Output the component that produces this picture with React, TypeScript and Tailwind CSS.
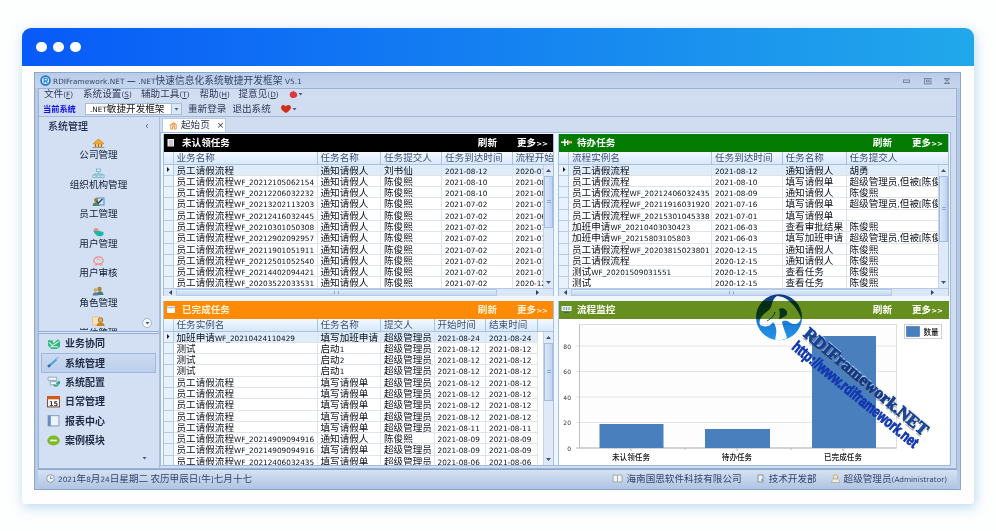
import React from "react";

const latin = "font-['DejaVu_Sans','Noto_Sans',sans-serif] text-[7.3px] leading-[0]";

/** Splits mixed text so that Latin runs use a smaller, wider face than the Chinese runs. */
function T({ children }: { children: string }) {
  const parts = children.match(/[\x20-\x7e]+|[^\x20-\x7e]+/g) || [];
  return (
    <>
      {parts.map((p, i) =>
        /^[\x20-\x7e]/.test(p) ? (
          <span key={i} className={latin}>{p}</span>
        ) : (
          <span key={i}>{p}</span>
        )
      )}
    </>
  );
}

type Col = { title: string; w: string };

function Header({ title, color, icon, titleClass = "" }: { title: string; color: string; icon: React.ReactNode; titleClass?: string }) {
  return (
    <div className={`flex h-[18px] shrink-0 items-center pb-px pl-[3px] font-bold text-white ${color}`}>
      <span className="flex w-[16px] items-center">{icon}</span>
      <span className={titleClass}>{title}</span>
      <span className={`ml-auto mr-[20px] ${titleClass}`}>刷新</span>
      <span className={`mr-[7px] w-[30px] whitespace-nowrap ${titleClass}`}>更多<span className="font-['DejaVu_Sans',sans-serif] text-[7px]">&gt;&gt;</span></span>
    </div>
  );
}

function VScroll({ thumb }: { thumb: string }) {
  return (
    <div className="flex w-[10px] shrink-0 flex-col items-center border-l border-[#c3d5ee] bg-[#dfe9f8]">
      <svg width="9" height="11" viewBox="0 0 9 11"><path d="M2 7 4.5 4 7 7z" fill="#3d5678" /></svg>
      <div className={`flex w-[9px] items-center justify-center border border-[#a3bce0] bg-gradient-to-r from-[#dbe8fa] to-[#bfd2ef] ${thumb}`}>
        <span className="h-[3px] w-[4px] border-y border-[#91aad0]" />
      </div>
      <svg className="mt-auto" width="9" height="11" viewBox="0 0 9 11"><path d="M2 4 4.5 7 7 4z" fill="#3d5678" /></svg>
    </div>
  );
}

function HScroll() {
  return (
    <div className="flex h-[8px] shrink-0 items-center border-t border-[#b5cae8] bg-[#dbe6f7]">
      <svg width="12" height="7" viewBox="0 0 12 7"><path d="M8 1 5 3.5 8 6z" fill="#2b405f" /></svg>
      <div className="flex h-[7px] w-[321px] items-center justify-center border border-[#b4c9e8] bg-gradient-to-b from-[#e2edfb] to-[#c2d5f0]">
        <span className="h-[3px] w-[5px] border-x border-[#91aad0]" />
      </div>
      <svg className="ml-auto mr-[11px]" width="10" height="7" viewBox="0 0 10 7"><path d="M4 1 7 3.5 4 6z" fill="#2b405f" /></svg>
    </div>
  );
}

function Grid({ cols, rows, thumb, first }: { cols: Col[]; rows: string[][]; thumb: string; first: string }) {
  return (
    <div className="flex min-h-0 flex-1 flex-col overflow-hidden bg-white">
      <div className="flex h-[12.5px] shrink-0 overflow-hidden border-b border-[#a9c3e4] bg-gradient-to-b from-[#f3f9ff] to-[#d8e8fa] text-[#3f5078]">
        <div className={`shrink-0 border-r border-[#b5cce8] ${first}`} />
        {cols.map((c, i) => (
          <div key={i} className={`shrink-0 overflow-x-clip whitespace-nowrap border-r border-[#a9c3e4] pl-[3px] leading-[11px] ${c.w}`}>{c.title}</div>
        ))}
      </div>
      <div className="flex min-h-0 flex-1">
        <div className="min-w-0 flex-1 overflow-hidden">
          {rows.map((r, ri) => (
            <div key={ri} className={`flex h-[11.3px] w-max ${ri === 0 ? "bg-[#dfedfb]" : "bg-white"}`}>
              <div className={`flex shrink-0 items-center justify-center border-b border-r border-[#b5cce8] bg-[#e8f2fd] ${first}`}>
                {ri === 0 && <svg width="4" height="5" viewBox="0 0 4 5"><path d="M1 0 3.5 2.5 1 5z" fill="#111827" /></svg>}
              </div>
              {cols.map((c, i) => (
                <div key={i} className={`shrink-0 overflow-x-clip whitespace-nowrap border-b border-r border-[#dfe4ea] pl-[3px] leading-[10.3px] text-[#0c1018] ${c.w}`}>
                  <T>{r[i] || ""}</T>
                </div>
              ))}
            </div>
          ))}
        </div>
        <VScroll thumb={thumb} />
      </div>
    </div>
  );
}

const colsA: Col[] = [
  { title: "业务名称", w: "w-[144px]" },
  { title: "任务名称", w: "w-[63.5px]" },
  { title: "任务提交人", w: "w-[61px]" },
  { title: "任务到达时间", w: "w-[70.5px]" },
  { title: "流程开始", w: "w-[60px]" },
];
const flow = "员工请假流程";
const rowsA = [
  [flow, "通知请假人", "刘书仙", "2021-08-12", "2020-07-0"],
  [flow + "WF_20212105062154", "通知请假人", "陈俊熙", "2021-08-10", "2021-08-0"],
  [flow + "WF_20212206032232", "通知请假人", "陈俊熙", "2021-08-10", "2021-08-0"],
  [flow + "WF_20213202113203", "通知请假人", "陈俊熙", "2021-07-02", "2021-07-0"],
  [flow + "WF_20212416032445", "通知请假人", "陈俊熙", "2021-07-02", "2021-06-0"],
  [flow + "WF_20210301050308", "通知请假人", "陈俊熙", "2021-07-02", "2021-07-0"],
  [flow + "WF_20212902092957", "通知请假人", "陈俊熙", "2021-07-02", "2021-07-0"],
  [flow + "WF_20211901051911", "通知请假人", "陈俊熙", "2021-07-02", "2021-07-0"],
  [flow + "WF_20212501052540", "通知请假人", "陈俊熙", "2021-07-02", "2021-07-0"],
  [flow + "WF_20214402094421", "通知请假人", "陈俊熙", "2021-07-02", "2021-07-0"],
  [flow + "WF_20203522033531", "通知请假人", "陈俊熙", "2021-07-02", "2020-12-0"],
];
const colsB: Col[] = [
  { title: "流程实例名", w: "w-[143px]" },
  { title: "任务到达时间", w: "w-[70.5px]" },
  { title: "任务名称", w: "w-[64px]" },
  { title: "任务提交人", w: "w-[104px]" },
];
const admin = "超级管理员";
const rowsB = [
  [flow, "2021-08-12", "通知请假人", "胡勇"],
  [flow, "2021-08-10", "填写请假单", "超级管理员,但被[陈俊熙]"],
  [flow + "WF_20212406032435", "2021-08-09", "通知请假人", "陈俊熙"],
  [flow + "WF_20211916031920", "2021-07-16", "填写请假单", "超级管理员,但被[陈俊熙]"],
  [flow + "WF_20215301045338", "2021-07-01", "填写请假单", ""],
  ["加班申请WF_20210403030423", "2021-06-03", "查看审批结果", "陈俊熙"],
  ["加班申请WF_20215803105803", "2021-06-03", "填写加班申请", "超级管理员,但被[陈俊熙]"],
  [flow + "WF_20203815023801", "2020-12-15", "通知请假人", "陈俊熙"],
  [flow, "2020-12-15", "通知请假人", "陈俊熙"],
  ["测试WF_20201509031551", "2020-12-15", "查看任务", "陈俊熙"],
  ["测试", "2020-12-15", "查看任务", "陈俊熙"],
];
const colsC: Col[] = [
  { title: "任务实例名", w: "w-[144px]" },
  { title: "任务名称", w: "w-[63.5px]" },
  { title: "提交人", w: "w-[53.5px]" },
  { title: "开始时间", w: "w-[51.5px]" },
  { title: "结束时间", w: "w-[52px]" },
];
const rowsC = [
  ["加班申请WF_20210424110429", "填写加班申请", admin, "2021-08-24", "2021-08-24"],
  ["测试", "启动1", admin, "2021-08-12", "2021-08-12"],
  ["测试", "启动2", admin, "2021-08-12", "2021-08-12"],
  ["测试", "启动1", admin, "2021-08-12", "2021-08-12"],
  [flow, "填写请假单", admin, "2021-08-12", "2021-08-12"],
  [flow, "填写请假单", admin, "2021-08-12", "2021-08-12"],
  [flow, "填写请假单", admin, "2021-08-12", "2021-08-12"],
  [flow, "填写请假单", admin, "2021-08-12", "2021-08-12"],
  [flow, "填写请假单", admin, "2021-08-11", "2021-08-11"],
  [flow + "WF_20214909094916", "通知请假人", "陈俊熙", "2021-08-09", "2021-08-09"],
  [flow + "WF_20214909094916", "填写请假单", admin, "2021-08-09", "2021-08-09"],
  [flow + "WF_20212406032435", "填写请假单", admin, "2021-08-06", "2021-08-06"],
];

function Chart() {
  const ticks = [0, 20, 40, 60, 80];
  const bars = [
    { x: 40.5, w: 64, top: 105, label: "未认领任务", c: 72 },
    { x: 146, w: 65, top: 110, label: "待办任务", c: 178 },
    { x: 253, w: 64, top: 17, label: "已完成任务", c: 284 },
  ];
  return (
    <svg width="391" height="145" viewBox="0 0 391 145" className="block bg-white">
      <rect x="20.5" y="5.500" width="317" height="123.500" fill="#fdfdfd" stroke="#d5d5d5" strokeWidth=".8" />
      {ticks.map((t) => (
        <g key={t}>
          <line x1="17" x2="337.500" y1={129 - t * 1.275} y2={129 - t * 1.275} stroke={t ? "#e4e4e4" : "#b8b8b8"} />
          <text x="12" y={131.5 - t * 1.275} textAnchor="end" className="fill-[#333] font-['DejaVu_Sans',sans-serif] text-[6px]">{t}</text>
        </g>
      ))}
      <line x1="20.5" x2="20.5" y1="6" y2="129" stroke="#c0c0c0" />
      {bars.map((b) => (
        <g key={b.label}>
          <rect x={b.x} y={b.top} width={b.w} height={129 - b.top} fill="#4a7fbd" />
          <line x1={b.c} x2={b.c} y1="129" y2="132" stroke="#b8b8b8" />
          <text x={b.c} y="140.500" textAnchor="middle" className="fill-[#111] text-[7.6px] font-medium">{b.label}</text>
        </g>
      ))}
      <line x1="126" x2="126" y1="129" y2="131" stroke="#b8b8b8" />
      <line x1="232" x2="232" y1="129" y2="131" stroke="#b8b8b8" />
      <rect x="345.5" y="5.500" width="37" height="14" fill="#fff" stroke="#cfcfcf" />
      <rect x="347.500" y="7.500" width="13" height="10" fill="#4a7fbd" stroke="#3b6eac" strokeWidth=".6" />
      <text x="364.500" y="15.500" className="fill-[#111] text-[7.6px] font-medium">数量</text>
    </svg>
  );
}

function Watermark() {
  return (
    <>
      <svg className="pointer-events-none absolute left-[740px] top-[285px] mix-blend-multiply" width="80" height="60" viewBox="0 0 80 60">
        <defs>
          <linearGradient id="disc" x1="0" y1="0" x2="0" y2="1">
            <stop offset="0" stopColor="#123f86" />
            <stop offset=".45" stopColor="#0f5cae" />
            <stop offset=".6" stopColor="#1a7fd6" />
            <stop offset="1" stopColor="#2396ec" />
          </linearGradient>
        </defs>
        <circle cx="39" cy="32.300" r="23" fill="url(#disc)" />
        <path d="M37 11C46 11 56 20 61 33C60 39 54 41 49 37C46 35 43 36 42 37C43 43 46 48 47 53C44 55 38 56 35 54.500C37 47 37 42 33 37C31 41 26 43 20 40C18 34 23 29 29 25C33 21 31 15 37 11z" fill="#fff" />
        <path d="M39 24C43 22 48 25 47 29C46 32 42 32 39 34.500C40 30 40 27 39 24z" fill="#0f5cae" />
        <path d="M35 27C34 31 31 34 27 36" fill="none" stroke="#0f5cae" strokeWidth="1" />
      </svg>
      <svg className="pointer-events-none absolute left-[740px] top-[285px]" width="200" height="175" viewBox="0 0 200 175">
        <defs>
          <linearGradient id="name" x1="0" y1="0" x2="1" y2="0">
            <stop offset="0" stopColor="#1747a8" />
            <stop offset=".45" stopColor="#12306f" />
            <stop offset="1" stopColor="#1f4fae" />
          </linearGradient>
        </defs>
        <g transform="translate(63 49) rotate(40)" className="font-['Liberation_Serif',serif] text-[17px] font-bold">
          <text x="2" y="3.500" textLength="157" lengthAdjust="spacingAndGlyphs" className="fill-[#6f7d88]" opacity=".6">RDIFramework.NET</text>
          <text x="-.5" y="0" textLength="157" lengthAdjust="spacingAndGlyphs" className="fill-[#c8d8ee]" opacity=".7">RDIFramework.NET</text>
          <text x=".5" y="1.500" textLength="157" lengthAdjust="spacingAndGlyphs" fill="url(#name)" stroke="#163c88" strokeWidth=".8">RDIFramework.NET</text>
        </g>
        <g transform="translate(51 63.500) rotate(39.300)">
          <text x="0" y="0" textLength="158" lengthAdjust="spacingAndGlyphs" stroke="#1238b0" strokeWidth=".9" className="fill-[#1238b0] font-['Liberation_Sans',sans-serif] text-[15.500px] font-bold">http://www.rdiframework.net</text>
        </g>
      </svg>
    </>
  );
}

const sideIcons: React.ReactNode[] = [
  <g key="0"><path d="M1 5 6 1l5 4v1H1z" fill="#e9ad3d" stroke="#c98416" strokeWidth=".6" /><path d="M2 6h8v3H2z" fill="#f2c56b" /><path d="M3 6v3M6 6v3M9 6v3" stroke="#a86c1c" /><path d="M0 9.500h12" stroke="#8b9ab0" /></g>,
  <g key="1" fill="#dff2f8" stroke="#6db0c4" strokeWidth=".8"><path d="M6 3v3M2 8V6h8v2" fill="none" /><rect x="4" y="1" width="4" height="2.500" /><rect x=".5" y="7" width="3" height="2.500" /><rect x="4.500" y="7" width="3" height="2.500" /><rect x="8.500" y="7" width="3" height="2.500" /></g>,
  <g key="2"><rect x="4.500" y="1" width="7" height="7" fill="#cfe2f6" stroke="#5689c6" /><circle cx="3.500" cy="3" r="2" fill="#a97936" /><path d="M0 9c0-5 7-5 7 0z" fill="#4a8b65" /><path d="m4 4 2 2 4-4" stroke="#2c4760" fill="none" strokeWidth="1.300" /></g>,
  <g key="3"><circle cx="3.500" cy="3.500" r="2.500" fill="#f28b82" /><path d="M1 4h6l4 1v3c-4 3-8 1-10-4z" fill="#1fb6a8" /></g>,
  <g key="4" fill="none" stroke="#f08b86" strokeWidth="1.200"><ellipse cx="6" cy="4.500" rx="4.700" ry="3.700" /><path d="M2 9h2l1-2M10 9H8L7 7" /><path d="M4 3c2-1 3 2 4 1" strokeWidth=".8" /></g>,
  <g key="5"><circle cx="7" cy="3" r="2.200" fill="#b18430" /><circle cx="3" cy="4" r="1.800" fill="#d3a557" /><path d="M4 9c0-5 7-5 7 0z" fill="#3f7d7a" /><path d="M0 9.500C0 5 6 5 6 9.500z" fill="#637c9e" /></g>,
  <g key="6"><path d="M0 1h7v8H0z" fill="#f8e3c0" stroke="#f0b06a" strokeWidth=".7" /><circle cx="8" cy="4" r="2.300" fill="#e8ad55" stroke="#91601c" strokeWidth=".8" /><path d="M4 10c0-5 8-5 8 0z" fill="#c98322" /></g>,
];
const sideItems = ["公司管理", "组织机构管理", "员工管理", "用户管理", "用户审核", "角色管理", "岗位管理"];

const navIcons: React.ReactNode[] = [
  <g key="0"><path d="M1 3h4l1 3 4-4 2 2v5L9 11H4L1 8z" fill="#37b580" /><path d="m2 5 3 3 6-4M3 9h7" stroke="#d8fff0" fill="none" /></g>,
  <g key="1"><path d="M1 10 9 3" stroke="#5aa2d8" strokeWidth="2" /><path d="M8 1 12 1 9 4z" fill="#9ec4e4" /><path d="m1 10 2-2" stroke="#2c6aa8" strokeWidth="2" /></g>,
  <g key="2"><path d="M1 2h8v3H1zM3 6h6v3H3z" fill="#edf4f8" stroke="#8aa6b8" strokeWidth=".8" /><path d="M6 9c3 3 5 0 5-3M9 8l2-2 1 2" fill="none" stroke="#28a37c" strokeWidth="1.200" /></g>,
  <g key="3"><rect x=".5" y="1.500" width="11" height="9.500" fill="#fff" stroke="#7a5040" /><path d="M0 1h12v3H0z" fill="#cf5a17" /><text x="6" y="10" textAnchor="middle" className="fill-[#333] font-['DejaVu_Sans',sans-serif] text-[6px] font-bold">15</text></g>,
  <g key="4"><rect x="1" y="1.500" width="10" height="9.500" fill="#eef4fb" stroke="#8da5c2" /><path d="M1 1.500h2.500v9.500H1z" fill="#5e8ec4" /></g>,
  <g key="5"><ellipse cx="6" cy="6" rx="5.700" ry="4.700" fill="#7cba29" /><path d="M3 6h6" stroke="#f4ffe0" strokeWidth="1.600" /></g>,
];
const navItems = ["业务协同", "系统管理", "系统配置", "日常管理", "报表中心", "案例模块"];

function Menu({ label, k, w }: { label: string; k: string; w: string }) {
  return (
    <span className={`whitespace-nowrap ${w}`}>
      {label}
      <span className={latin}>(<u>{k}</u>)</span>
    </span>
  );
}

function Caret() {
  return <svg width="5" height="4" viewBox="0 0 5 4"><path d="M.5 1h4l-2 2.500z" fill="#4a5a78" /></svg>;
}

export default function App() {
  return (
    <div className="relative h-[531px] w-[996px] overflow-hidden bg-[#fdfefe] pl-[22px] pt-[28px] font-['Noto_Sans_CJK_SC',sans-serif] text-[9.6px] leading-none text-[#2c3a58]">
      <div className="h-[476px] w-[952px] rounded-[9px] rounded-b-[3px] bg-[#fefefe] shadow-[1px_3px_12px_rgba(120,180,225,0.5)]">
        <div className="flex h-[38px] items-center gap-[6.500px] rounded-t-[9px] bg-linear-to-r/srgb from-[#085af8] to-[#21a8ea] pl-[14px]">
          <span className="size-[10.500px] rounded-full bg-white" />
          <span className="size-[10.500px] rounded-full bg-white" />
          <span className="size-[10.500px] rounded-full bg-white" />
        </div>

        <div className="ml-[12px] mt-[6px] flex h-[418px] w-[927px] flex-col border border-[#8ba6d0] bg-[#b6c9e5]">
          {/* Title bar */}
          <div className="flex h-[15px] shrink-0 items-center bg-gradient-to-b from-[#b9cce8] to-[#c6d6ed] pl-[5px]">
            <svg width="11" height="11" viewBox="0 0 12 12">
              <circle cx="6" cy="6" r="4.800" fill="#eef6ff" stroke="#1678cf" strokeWidth="1.800" />
              <path d="M4.500 9V3.500h2a1.600 1.600 0 0 1 0 3.200h-2M6.500 6.700 8 9" fill="none" stroke="#1678cf" strokeWidth="1.200" />
            </svg>
            <span className="ml-[2px] whitespace-nowrap text-[9.700px] tracking-[.09px] text-[#33466a]"><T>RDIFramework.NET </T><span className="font-bold">—</span><T> .NET快速信息化系统敏捷开发框架 V5.1</T></span>
            <svg className="ml-auto mr-[6px]" width="52" height="8" viewBox="0 0 52 8" fill="none" stroke="#7686a4">
              <rect x="1.500" y="3" width="6" height="2.500" />
              <rect x="22.500" y="1.500" width="6.500" height="5.500" /><rect x="24.500" y="3" width="2.500" height="2" />
              <path d="M42 1.500h6M42 6.500h6M43 2l4 4M47 2l-4 4" strokeWidth="1.200" />
            </svg>
          </div>

          <div className="mx-[3px] flex min-h-0 flex-1 flex-col border border-[#9bb2d6] bg-[#d0dcef]">
            {/* Menu bar */}
            <div className="flex h-[12px] shrink-0 items-center bg-[#d1ddf0] pb-[2px] pl-[5px]">
              <Menu label="文件" k="F" w="w-[39px]" />
              <Menu label="系统设置" k="S" w="w-[58px]" />
              <Menu label="辅助工具" k="T" w="w-[58.5px]" />
              <Menu label="帮助" k="H" w="w-[39px]" />
              <Menu label="提意见" k="D" w="w-[50px]" />
              <svg width="9" height="9" viewBox="0 0 9 9"><path d="M1 3c2-2 6-2 7 1s-2 4-4 4S0 6 1 3z" fill="#e0383a" /><path d="M4 2 5 1" stroke="#e0383a" /></svg>
              <Caret />
            </div>
            {/* Toolbar */}
            <div className="flex h-[15px] shrink-0 items-center pl-[4px]">
              <span className="w-[42px] text-[8.200px] font-bold text-[#1414e6]">当前系统</span>
              <span className="flex h-[12px] w-[97px] items-center border border-[#a9bddb] bg-white pl-[4px] text-[#111]">
                <span className="whitespace-nowrap"><T>.NET敏捷开发框架</T></span>
                <span className="ml-auto flex h-full w-[10px] items-center justify-center border-l border-[#a9bddb] bg-[#dbe6f6]"><Caret /></span>
              </span>
              <span className="ml-[6px]">重新登录</span>
              <span className="ml-[6px]">退出系统</span>
              <svg className="ml-[9px]" width="12" height="10" viewBox="0 0 12 10"><path d="M6 9C2 7 0 4 1.500 2S5 1 6 2.500C7 1 9 .5 10.500 2S10 7 6 9z" fill="#d22f18" /></svg>
              <Caret />
            </div>

            <div className="flex min-h-0 flex-1 border-t border-[#a4b9da]">
              {/* Sidebar */}
              <div className="flex w-[121px] shrink-0 flex-col border-r border-[#a9bddb] bg-[#d3dff2]">
                <div className="flex h-[18px] shrink-0 items-center pl-[9px] text-[10px] font-medium text-[#1f2c49]">
                  系统管理
                  <svg className="ml-auto mr-[10px]" width="5" height="6" viewBox="0 0 5 6"><path d="M4 1 2 3l2 2" fill="none" stroke="#5e6f90" /></svg>
                </div>
                <div className="relative h-[196px] overflow-hidden pr-px">
                  {sideItems.map((s, i) => (
                    <div key={s} className="flex h-[29.600px] flex-col items-center pt-[3px]">
                      <svg className="shrink-0" width="13" height="11" viewBox="0 0 12 11">{sideIcons[i]}</svg>
                      <span className="whitespace-nowrap leading-[11px] text-[#131d33]">{s}</span>
                    </div>
                  ))}
                  <div className="absolute bottom-[3px] right-[7px] flex size-[10px] items-center justify-center rounded-full border border-[#a5b3c8] bg-[#f5f8fc]"><Caret /></div>
                </div>
                <div className="h-[3px] shrink-0 border-y border-[#8fabd6] bg-[#e4ecf8]" />
                <div className="pr-[3px]">
                  {navItems.map((s, i) => (
                    <div key={s} className={`ml-[2px] flex h-[19.400px] items-center border pb-px pl-[5px] text-[10px] font-semibold text-[#1f2b45] ${i === 1 ? "border-[#9db6df] bg-gradient-to-b from-[#ccdaf0] to-[#bccfeb]" : "border-transparent"}`}>
                      <svg className="mr-[5px]" width="13" height="13" viewBox="0 0 12 12">{navIcons[i]}</svg>
                      {s}
                    </div>
                  ))}
                </div>
                <div className="mr-[12px] mt-[6px] flex justify-end"><Caret /></div>
              </div>

              {/* Workspace */}
              <div className="min-w-0 flex-1">
                <div className="flex h-[15px] items-end pl-[2px]">
                  <div className="flex h-[14px] w-[64px] items-center border border-b-0 border-[#b8c9e2] bg-[#fdfeff] pb-px pl-[6px] text-[#2c3550]">
                    <svg width="9" height="9" viewBox="0 0 10 10"><path d="m0 5 5-4 5 4z" fill="#f1a455" /><path d="M2 5v4h2V6h2v3h2V5" fill="none" stroke="#e08b3a" /></svg>
                    <span className="ml-[3px]">起始页</span>
                    <span className="ml-[7px] font-['DejaVu_Sans',sans-serif] text-[9px]">×</span>
                  </div>
                </div>
                <div className="grid w-[791px] grid-cols-[391px_391px] grid-rows-[162px_164px] gap-x-[4px] gap-y-[5px] border border-[#9fb9e0] bg-[#f1f6fd] pl-[2px] pt-[1px]">
                  <section className="flex min-h-0 flex-col overflow-hidden border-x border-[#a3c0ea]">
                    <Header title="未认领任务" color="bg-black -mx-px" icon={<svg width="9" height="9" viewBox="0 0 9 9"><rect x="1.500" y="1" width="6.500" height="7.500" fill="#eee" /><path d="M3 3h4M3 5h4M3 7h4" stroke="#777" strokeWidth=".6" /></svg>} />
                    <Grid cols={colsA} rows={rowsA} thumb="h-[52px]" first="w-[9.500px]" />
                    <HScroll />
                  </section>
                  <section className="flex min-h-0 flex-col overflow-hidden border-x border-[#a3c0ea]">
                    <Header title="待办任务" color="bg-[#047c04] -mx-px" icon={<svg width="11" height="9" viewBox="0 0 11 9"><path d="M0 3.500h11v1.500H0zM3 1h1.500v7H3z" fill="#f5fff5" /><path d="M6 2h1.500v5H6z" fill="#cfe8ff" /><path d="M7.500 3h3v2.500h-3z" fill="#f0a060" /></svg>} />
                    <Grid cols={colsB} rows={rowsB} thumb="h-[66px]" first="w-[10px]" />
                    <HScroll />
                  </section>
                  <section className="flex min-h-0 flex-col overflow-hidden border-x border-[#a3c0ea]">
                    <Header title="已完成任务" color="bg-[#ff8a05] -mx-px" titleClass="text-[#fff3d6]" icon={<svg width="10" height="9" viewBox="0 0 10 9"><rect x="1" y="1" width="8" height="7" rx="1" fill="#fff" /><path d="M1 2.500h8" stroke="#9dc0e4" strokeWidth="1.500" /></svg>} />
                    <Grid cols={colsC} rows={rowsC} thumb="h-[58px]" first="w-[9.500px]" />
                  </section>
                  <section className="min-h-0 overflow-hidden border-l border-[#a3c0ea] bg-white">
                    <Header title="流程监控" color="bg-[#678f20] -ml-px" icon={<svg width="11" height="9" viewBox="0 0 11 9"><rect x=".5" y="1" width="10" height="5" fill="#e6f0f4" /><path d="M3 2v3M5.500 2v3M8 2v3" stroke="#6a8aa0" /><path d="M3 7.500h5" stroke="#3f6070" /></svg>} />
                    <Chart />
                  </section>
                </div>
              </div>
            </div>
          </div>

          {/* Status bar */}
          <div className="mx-[3px] flex h-[20px] shrink-0 items-center border-t border-[#8da6ca] bg-gradient-to-b from-[#d6e2f3] to-[#afc4e2] pb-[2px] pl-[8px] pr-[10px] text-[#33466b]">
            <svg width="9" height="9" viewBox="0 0 9 9"><circle cx="4.500" cy="4.500" r="3.800" fill="#eef2f7" stroke="#8596ad" strokeWidth=".9" /><path d="M4.500 2.500v2h2" fill="none" stroke="#607080" strokeWidth=".8" /></svg>
            <span className="ml-[3px] whitespace-nowrap"><T>2021年8月24日星期二 农历甲辰日[牛]七月十七</T></span>
            <svg className="ml-auto" width="11" height="9" viewBox="0 0 11 9"><path d="M1 1h4l.5.500L6 1h4v7H1zM5.500 1v7" fill="#f2f5ef" stroke="#8b9aa8" strokeWidth=".8" /></svg>
            <span className="ml-[4px] whitespace-nowrap">海南国思软件科技有限公司</span>
            <svg className="ml-[14px]" width="9" height="9" viewBox="0 0 9 9"><rect x="2" y="1" width="5" height="7" fill="#edf3f5" stroke="#8498a8" /><path d="M5 6h2" stroke="#5c8560" /></svg>
            <span className="ml-[4px] whitespace-nowrap">技术开发部</span>
            <svg className="ml-[14px]" width="9" height="9" viewBox="0 0 9 9"><circle cx="4.500" cy="3" r="2.300" fill="#f4e3b8" stroke="#b09a68" strokeWidth=".7" /><path d="M.5 8.500c0-5 8-5 8 0z" fill="#f4efe0" stroke="#a8a18c" strokeWidth=".7" /></svg>
            <span className="ml-[4px] whitespace-nowrap"><T>超级管理员(Administrator)</T></span>
          </div>
        </div>
      </div>
      <Watermark />
    </div>
  );
}
